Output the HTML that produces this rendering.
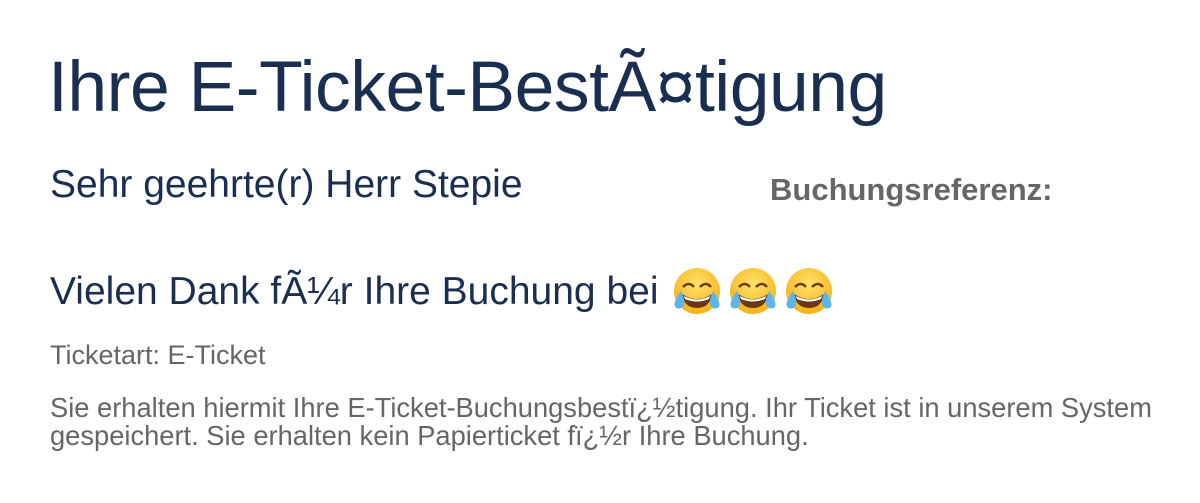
<!DOCTYPE html>
<html><head><meta charset="utf-8"><style>
body{margin:0;background:#fff;width:1200px;height:503px;overflow:hidden;font-family:"Liberation Sans",Arial,sans-serif;position:relative}
.a{position:absolute;white-space:nowrap}
h1{position:absolute;left:48px;top:46px;margin:0;font-weight:normal;font-size:71.5px;color:#1a2e51;letter-spacing:-0.5px;white-space:nowrap}
.s{font-size:39px;color:#1a2e51}
.g{color:#666}
svg{position:absolute}
</style></head><body>
<h1>Ihre E-Ticket-BestÃ¤tigung</h1>
<div class="a s" style="left:50px;top:163px">Sehr geehrte(r) Herr Stepie</div>
<div class="a g" style="left:770px;top:172px;font-size:31px;font-weight:bold">Buchungsreferenz:</div>
<div class="a s" style="left:50px;top:270px">Vielen Dank fÃ¼r Ihre Buchung bei</div>
<svg width="180" height="60" style="left:660px;top:260px" viewBox="0 0 180 60">
<defs><radialGradient id="f" cx="50%" cy="35%" r="60%"><stop offset="0" stop-color="#ffe36a"/><stop offset="1" stop-color="#f5b520"/></radialGradient>
<g id="e"><circle cx="0" cy="0" r="23" fill="url(#f)"/>
<path d="M-14,-4 q6,-6 11,0 M3,-4 q6,-6 11,0" stroke="#6b3a10" stroke-width="2.5" fill="none"/>
<path d="M-15,3 q15,10 30,0 q-2,14 -15,14 q-13,0 -15,-14z" fill="#6b3a10"/>
<path d="M-13,5 q13,7 26,0 l-1,3 q-12,5 -24,0z" fill="#fff"/>
<path d="M-16,0 q-8,10 -6,16 q5,4 9,-2 q1,-6 -3,-14z" fill="#5fb4e8"/>
<path d="M16,0 q8,10 6,16 q-5,4 -9,-2 q-1,-6 3,-14z" fill="#5fb4e8"/></g></defs>
<use href="#e" x="37" y="31"/><use href="#e" x="93" y="31"/><use href="#e" x="149" y="31"/>
</svg>
<div class="a g" style="left:50px;top:340px;font-size:27px">Ticketart: E-Ticket</div>
<div class="a g" style="left:50px;top:394px;font-size:27.3px;line-height:28px">Sie erhalten hiermit Ihre E-Ticket-Buchungsbestï¿½tigung. Ihr Ticket ist in unserem System<br>gespeichert. Sie erhalten kein Papierticket fï¿½r Ihre Buchung.</div>
</body></html>
